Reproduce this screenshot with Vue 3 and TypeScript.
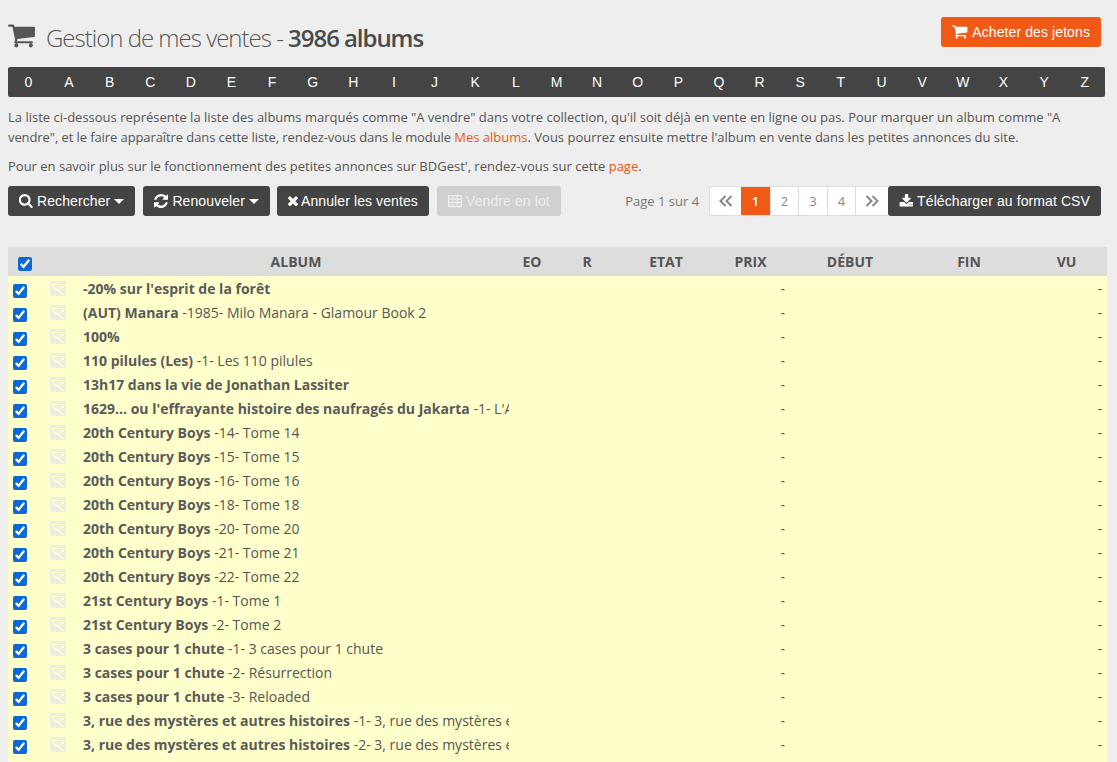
<script setup lang="ts">
const letters = '0ABCDEFGHIJKLMNOPQRSTUVWXYZ'.split('')
const rows = [
  ['-20% sur l\'esprit de la forêt', ''],
  ['(AUT) Manara', ' -1985- Milo Manara - Glamour Book 2'],
  ['100%', ''],
  ['110 pilules (Les)', ' -1- Les 110 pilules'],
  ['13h17 dans la vie de Jonathan Lassiter', ''],
  ['1629... ou l\'effrayante histoire des naufragés du Jakarta', ' -1- L\'Apothicaire du diable'],
  ['20th Century Boys', ' -14- Tome 14'],
  ['20th Century Boys', ' -15- Tome 15'],
  ['20th Century Boys', ' -16- Tome 16'],
  ['20th Century Boys', ' -18- Tome 18'],
  ['20th Century Boys', ' -20- Tome 20'],
  ['20th Century Boys', ' -21- Tome 21'],
  ['20th Century Boys', ' -22- Tome 22'],
  ['21st Century Boys', ' -1- Tome 1'],
  ['21st Century Boys', ' -2- Tome 2'],
  ['3 cases pour 1 chute', ' -1- 3 cases pour 1 chute'],
  ['3 cases pour 1 chute', ' -2- Résurrection'],
  ['3 cases pour 1 chute', ' -3- Reloaded'],
  ['3, rue des mystères et autres histoires', ' -1- 3, rue des mystères et autres histoires'],
  ['3, rue des mystères et autres histoires', ' -2- 3, rue des mystères et autres histoires'],
]
const cartPath = 'M704 1536q0 52-38 90t-90 38-90-38-38-90 38-90 90-38 90 38 38 90zm896 0q0 52-38 90t-90 38-90-38-38-90 38-90 90-38 90 38 38 90zm128-1088v512q0 24-16.500 42.500t-40.500 21.500l-1044 122q13 60 13 70 0 16-24 64h920q26 0 45 19t19 45-19 45-45 19h-1024q-26 0-45-19t-19-45q0-11 8-31.500t16-36 21.500-40 15.500-29.500l-177-823h-204q-26 0-45-19t-19-45 19-45 45-19h256q16 0 28.500 6.500t19.500 15.500 13 24.500 8 26 5.500 29.500 4.500 26h1201q26 0 45 19t19 45z'
</script>

<template>
  <div class="page">
    <header class="top">
      <h1 class="title">
        <svg class="cart" viewBox="64 256 1728 1408"><path :d="cartPath" /></svg>
        <span>Gestion de mes ventes - <b>3986 albums</b></span>
      </h1>
      <button class="btn orange">
        <svg class="ico wide" viewBox="64 256 1728 1408"><path :d="cartPath" /></svg>
        Acheter des jetons
      </button>
    </header>

    <nav class="letters">
      <span v-for="l in letters" :key="l">{{ l }}</span>
    </nav>

    <p class="intro">La liste ci-dessous représente la liste des albums marqués comme "A vendre" dans votre collection, qu'il soit déjà en vente en ligne ou pas. Pour marquer un album comme "A <span class="tight">vendre", et le faire apparaître dans cette liste, rendez-vous dans le module </span><a>Mes albums</a>. Vous pourrez ensuite mettre l'album en vente dans les petites annonces du site.</p>
    <p class="intro second">Pour en savoir plus sur le fonctionnement des petites annonces sur BDGest', rendez-vous sur cette <a>page</a>.</p>

    <div class="toolbar">
      <button class="btn dark">
        <svg class="ico" viewBox="128 128 1600 1664"><path d="M1216 832q0-185-131.500-316.500t-316.500-131.500-316.500 131.500-131.500 316.500 131.500 316.500 316.500 131.500 316.500-131.500 131.500-316.500zm512 832q0 52-38 90t-90 38q-54 0-90-38l-343-342q-179 124-399 124-143 0-273.500-55.500t-225-150-150-225-55.500-273.500 55.500-273.500 150-225 225-150 273.500-55.500 273.500 55.500 225 150 150 225 55.500 273.500q0 220-124 399l343 343q37 37 37 90z" /></svg>
        Rechercher<i class="caret"></i>
      </button>
      <button class="btn dark second-btn">
        <svg class="ico" viewBox="128 128 1536 1536"><path d="M1639 1056q0 5-1 7-64 268-268 434.500t-478 166.500q-146 0-282.500-55t-243.500-157l-129 129q-19 19-45 19t-45-19-19-45v-448q0-26 19-45t45-19h448q26 0 45 19t19 45-19 45l-137 137q71 66 161 102t187 36q134 0 250-65t186-179q11-17 53-117 8-23 30-23h192q13 0 22.500 9.500t9.500 22.500zm25-800v448q0 26-19 45t-45 19h-448q-26 0-45-19t-19-45 19-45l138-138q-148-137-349-137-134 0-250 65t-186 179q-11 17-53 117-8 23-30 23h-199q-13 0-22.500-9.500t-9.500-22.500v-7q65-268 270-434.500t480-166.500q146 0 284 55.500t245 156.500l130-129q19-19 45-19t45 19 19 45z" /></svg>
        Renouveler<i class="caret"></i>
      </button>
      <button class="btn dark">
        <svg class="ico small" viewBox="300 340 1200 1200"><path d="M1490 1322q0 40-28 68l-136 136q-28 28-68 28t-68-28l-294-294-294 294q-28 28-68 28t-68-28l-136-136q-28-28-28-68t28-68l294-294-294-294q-28-28-28-68t28-68l136-136q28-28 68-28t68 28l294 294 294-294q28-28 68-28t68 28l136 136q28 28 28 68t-28 68l-294 294 294 294q28 28 28 68z" /></svg>
        Annuler les ventes
      </button>
      <button class="btn disabled">
        <svg class="ico" viewBox="0 0 16 14"><path d="M1 0h14a1 1 0 0 1 1 1v12a1 1 0 0 1-1 1H1a1 1 0 0 1-1-1V1a1 1 0 0 1 1-1zm.500 1.500V4H5V1.500zm4.800 0V4h3.400V1.500zm4.700 0V4h3.500V1.500zM1.500 5.500V8H5V5.500zm4.800 0V8h3.400V5.500zm4.700 0V8h3.500V5.500zM1.500 9.500v3H5v-3zm4.800 0v3h3.400v-3zm4.700 0v3h3.500v-3z" fill-rule="evenodd" /></svg>
        Vendre en lot
      </button>
      <span class="pageinfo">Page 1 sur 4</span>
      <div class="pager">
        <span class="end"><svg viewBox="0 0 14 12"><path d="M6.500 1 1.500 6l5 5M12.500 1l-5 5 5 5" /></svg></span>
        <span class="on">1</span>
        <span>2</span>
        <span>3</span>
        <span>4</span>
        <span class="end"><svg viewBox="0 0 14 12"><path d="m1.500 1 5 5-5 5M7.500 1l5 5-5 5" /></svg></span>
      </div>
      <button class="btn dark csv">
        <svg class="ico" viewBox="0 128 1664 1536"><path d="M1344 1344q0-26-19-45t-45-19-45 19-19 45 19 45 45 19 45-19 19-45zm256 0q0-26-19-45t-45-19-45 19-19 45 19 45 45 19 45-19 19-45zm128-224v320q0 40-28 68t-68 28h-1472q-40 0-68-28t-28-68v-320q0-40 28-68t68-28h465l135 136q58 56 136 56t136-56l136-136h464q40 0 68 28t28 68zm-325-569q17 41-14 70l-448 448q-18 19-45 19t-45-19l-448-448q-31-29-14-70 17-39 59-39h256v-448q0-26 19-45t45-19h256q26 0 45 19t19 45v448h256q42 0 59 39z" /></svg>
        Télécharger au format CSV
      </button>
    </div>

    <div class="thead grid">
      <span class="c-check head"><input type="checkbox" checked /></span>
      <span></span>
      <span class="center">ALBUM</span>
      <span class="center">EO</span>
      <span class="center">R</span>
      <span class="center">ETAT</span>
      <span class="center">PRIX</span>
      <span class="center">DÉBUT</span>
      <span class="center">FIN</span>
      <span class="center">VU</span>
    </div>
    <div v-for="(r, i) in rows" :key="i" class="row grid">
      <span class="c-check"><input type="checkbox" checked /></span>
      <span class="c-mail">
        <svg viewBox="0 0 16 15"><rect width="16" height="15" rx="1" /><path d="M1 3.500h14M2 5l12 9M14 5l-5 4" /></svg>
      </span>
      <span class="name"><b>{{ r[0] }}</b>{{ r[1] }}</span>
      <span></span>
      <span></span>
      <span></span>
      <span class="dash prix">-</span>
      <span></span>
      <span></span>
      <span class="dash">-</span>
    </div>
    <div class="row"></div>
  </div>
</template>

<style>
html, body {
  background: #eeeeee;
  overflow: hidden;
}
</style>

<style scoped>
.page {
  padding: 17px 10px 0 8px;
  font-family: "Open Sans", sans-serif;
  color: #555555;
  font-size: 13px;
  height: 762px;
  box-sizing: border-box;
}
.top {
  display: flex;
  justify-content: space-between;
  align-items: flex-start;
  margin-right: 6px;
  height: 50px;
}
.title {
  margin: 0;
  display: flex;
  align-items: center;
  font-size: 24px;
  font-weight: 300;
  letter-spacing: -1px;
  height: 40px;
  color: #555;
}
.title b {
  font-weight: 600;
  letter-spacing: -1.05px;
  color: #4a4a4a;
}
.cart {
  width: 28px;
  height: 26px;
  fill: #555;
  margin-right: 10px;
  margin-top: -3px;
}
.btn {
  font-family: "Liberation Sans", sans-serif;
  font-size: 14px;
  letter-spacing: 0.1px;
  border: 0;
  border-radius: 3px;
  height: 30px;
  padding: 0 11px;
  color: #fff;
  display: inline-flex;
  align-items: center;
  gap: 4px;
}
.orange {
  background: #f15a16;
}
.dark {
  background: #444444;
}
.second-btn {
  margin-right: -1px;
}
.disabled {
  background: #cfd0d0;
  color: #eeeeee;
}
.ico {
  width: 14px;
  height: 14px;
  fill: currentColor;
}
.ico.wide {
  width: 16px;
}
.ico.small {
  width: 10px;
  height: 10px;
  margin-right: -1px;
}
.caret {
  width: 0;
  height: 0;
  border: 5px solid transparent;
  border-top-color: #fff;
  border-bottom: 0;
}
.letters {
  margin-right: 2px;
  height: 30px;
  background: #444444;
  border-radius: 2px;
  color: #fff;
  font-family: "Liberation Sans", sans-serif;
  font-size: 14px;
  display: grid;
  grid-template-columns: repeat(27, 1fr);
  align-items: center;
  text-align: center;
}
.intro {
  margin: 10px 6px 0 0;
  line-height: 20px;
  font-size: 13px;
}
.intro.second {
  margin-top: 9px;
}
.intro a {
  color: #e8590c;
}
.tight {
  letter-spacing: -0.09px;
}
.toolbar {
  margin: 10px 6px 0 0;
  display: flex;
  align-items: center;
  gap: 8px;
  height: 30px;
}
.pageinfo {
  margin-left: auto;
  color: #777;
}
.pager {
  display: flex;
  height: 30px;
  background: #fff;
  border: 1px solid #ddd;
  border-right: 0;
  border-radius: 3px 0 0 3px;
  box-sizing: border-box;
  margin-left: 2px;
  margin-right: -8px;
}
.pager span {
  width: 28.500px;
  display: flex;
  align-items: center;
  justify-content: center;
  border-left: 1px solid #ddd;
  color: #888;
  box-sizing: border-box;
}
.pager .end {
  width: 33px;
}
.pager .end:first-child {
  border-left: 0;
  width: 31px;
}
.pager svg {
  width: 14px;
  height: 12px;
  fill: none;
  stroke: #888;
  stroke-width: 2;
}
.pager .on {
  background: #f15a16;
  color: #fff;
  font-weight: 600;
  border-left: 0;
}
.grid {
  display: grid;
  grid-template-columns: 30px 45px 426px 46px 64px 94px 75px 124px 114px 81px;
  align-items: center;
}
.thead {
  margin-top: 31px;
  height: 29px;
  background: #dddddd;
  font-weight: 700;
  font-size: 14px;
  color: #555;
}
.center {
  text-align: center;
}
.row {
  height: 24px;
  background: #ffffcc;
  font-size: 14px;
}
.c-check {
  display: flex;
  padding: 5px 0 0 5px;
}
.c-check.head {
  padding: 5px 0 0 10px;
}
.c-check input {
  margin: 0;
  width: 14px;
  height: 14px;
  accent-color: #0b68d8;
}
.c-mail svg {
  display: block;
  width: 16px;
  height: 15px;
  fill: #eeeee0;
  margin: 1px 0 0 12px;
}
.c-mail path {
  fill: none;
  stroke: #ffffcc;
  stroke-width: 1.2;
}
.name {
  white-space: nowrap;
  overflow: hidden;
}
.name b {
  font-weight: 700;
  color: #5a5a5a;
}
.dash {
  text-align: right;
  padding-right: 5px;
}
.dash.prix {
  padding-right: 3px;
}
</style>
